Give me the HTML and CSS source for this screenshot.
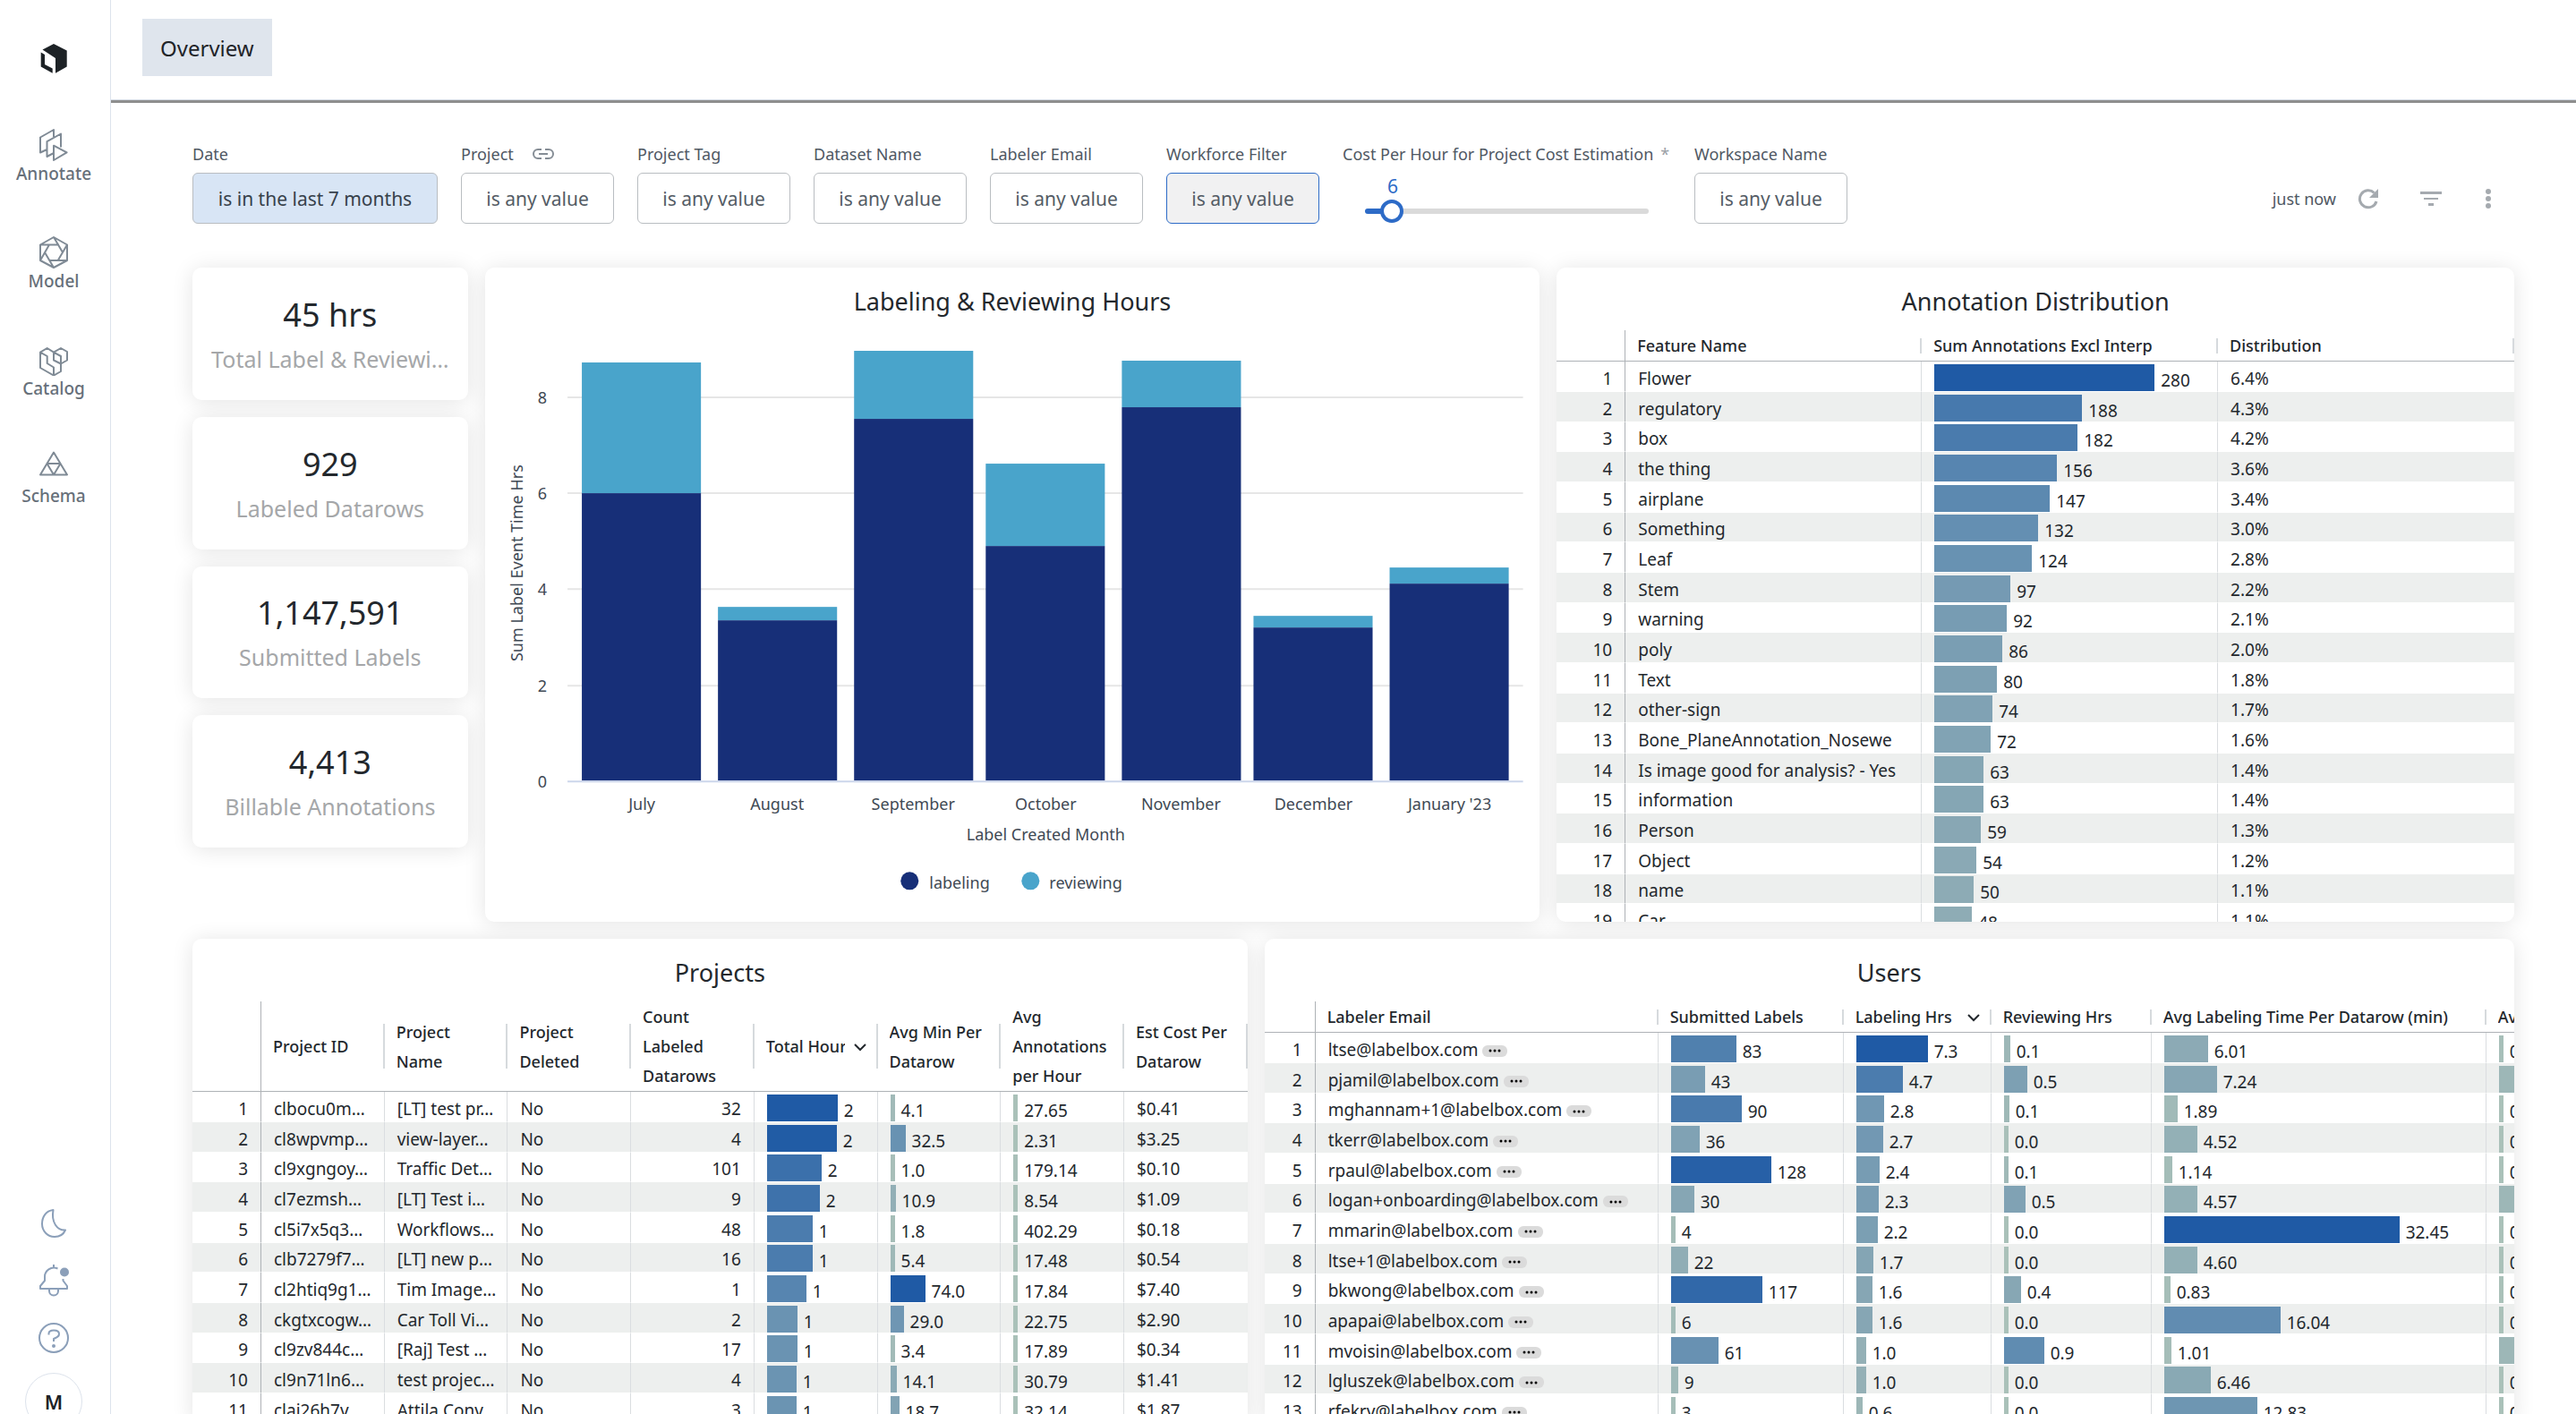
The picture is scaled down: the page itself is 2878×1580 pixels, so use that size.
FILE: index.html
```html
<!DOCTYPE html>
<html lang="en">
  <head>
    <meta charset="UTF-8" />
    <meta name="viewport" content="width=device-width, initial-scale=1.0" />
    <title>Overview</title>
    <link rel="stylesheet" href="styles.css">
  </head>

  <body>
    <div class="app">
      <!-- sidebar -->
      <nav class="sidebar">
        <a class="logo" href="#" aria-label="Home">
          <svg width="30" height="33" viewBox="0 0 30 33">
            <path d="M2.5 6.6 15 0l14.7 7.5v18L17 32.7V16z" />
            <path d="M.7 9.5 5 12v11l8.7 4.5v5.2L.7 25.5z" />
          </svg>
        </a>
        <a class="navItem" href="#">
          <svg width="32" height="36" viewBox="0 0 32 36">
            <path d="M16 9V1L1 9.5v17L8.5 23M24 20.500V5.500L8.500 14.200V31L16 27M16 18.700 30.600 26.400 16 35z" />
          </svg>
          <span>Annotate</span>
        </a>
        <a class="navItem" href="#">
          <svg width="32" height="36" viewBox="0 0 32 36">
            <path d="M16 1l15 8.500v17.500L16 35 1 27V9.500zM1 9.500h21M16 1l10 17M31 9.500 21 26.500M31 27H11M16 35 6 18M1 27 11 9.500" />
          </svg>
          <span>Model</span>
        </a>
        <a class="navItem" href="#">
          <svg width="32" height="36" viewBox="0 0 32 36">
            <path d="M1 9.700 8.700 5 16 9.700 24 5l7 4v9.500l-7 4V31l-8 4.500-15-8.500zM1 9.700l7.700 4.300v8l7.300 4.500v9M16 9.700v8.800l8 4M16 9.700l8 4.300v8.500" />
          </svg>
          <span>Catalog</span>
        </a>
        <a class="navItem" href="#">
          <svg width="32" height="36" viewBox="0 0 32 36">
            <path d="M16 1.500 31 26.500H1zM8.500 14h15L16 26.500z" />
          </svg>
          <span>Schema</span>
        </a>

        <div class="navBottom">
          <button class="iconBtn" aria-label="Dark mode">
            <svg width="32" height="36" viewBox="0 0 32 36">
              <path d="M15.500 3C7 4 3 11 3 18.500c0 8 6 14.500 14 14.500 5.500 0 10-3 12-7.500C20 26 13 17 15.500 3z" />
            </svg>
          </button>
          <button class="iconBtn" aria-label="Notifications">
            <svg width="34" height="36" viewBox="0 0 34 36">
              <path d="M17 0v4M21.500 4.500C14 1.500 7 7 7 13.500V18L2 24v3h30v-3l-4.500-6v-2M12 27.500v2a5 5 0 0 0 10 0v-2" />
              <circle class="dot" cx="29" cy="8.500" r="5" />
            </svg>
          </button>
          <button class="iconBtn" aria-label="Help">
            <svg width="36" height="36" viewBox="0 0 36 36">
              <circle cx="18" cy="18" r="16" />
              <path d="M12.500 14.500V13c0-2.500 2-3.500 5.500-3.500s6 1 6 4-2 3.500-6 5.500v3" />
              <circle class="dot" cx="18" cy="27" r="2" />
            </svg>
          </button>
          <button class="avatar">M</button>
        </div>
      </nav>

      <div class="content">
        <header class="header">
          <button class="tab">Overview</button>
        </header>

        <main class="main">
          <!-- filters -->
          <div class="filters">
            <div class="filter">
              <label for="date">Date</label>
              <button id="date" class="filterBtn active">is in the last 7 months</button>
            </div>
            <div class="filter">
              <label for="project">Project
                <svg class="linkIcon" width="26" height="14" viewBox="0 0 26 14">
                  <path d="M11 2H7a5 5 0 0 0 0 10h4M15 2h4a5 5 0 0 1 0 10h-4M8 7h10" />
                </svg>
              </label>
              <button id="project" class="filterBtn">is any value</button>
            </div>
            <div class="filter">
              <label for="tag">Project Tag</label>
              <button id="tag" class="filterBtn">is any value</button>
            </div>
            <div class="filter">
              <label for="dataset">Dataset Name</label>
              <button id="dataset" class="filterBtn">is any value</button>
            </div>
            <div class="filter">
              <label for="labeler">Labeler Email</label>
              <button id="labeler" class="filterBtn">is any value</button>
            </div>
            <div class="filter">
              <label for="workforce">Workforce Filter</label>
              <button id="workforce" class="filterBtn focused">is any value</button>
            </div>
            <div class="filter cost">
              <label for="cost">Cost Per Hour for Project Cost Estimation <span class="star">*</span></label>
              <div class="slider">
                <output for="cost">6</output>
                <input id="cost" type="range" min="0" max="100" value="6" />
              </div>
            </div>
            <div class="filter">
              <label for="workspace">Workspace Name</label>
              <button id="workspace" class="filterBtn">is any value</button>
            </div>

            <div class="actions">
              <span>just now</span>
              <button aria-label="Reload">
                <svg width="24" height="24" viewBox="0 0 24 24">
                  <path class="stroke" d="M21 15a9.500 9.500 0 1 1-2.500-9.500" />
                  <path d="M23 1v10H13z" />
                </svg>
              </button>
              <button aria-label="Filters">
                <svg width="24" height="24" viewBox="0 0 24 24">
                  <path d="M0 4h24v3H0zM4 11h16v2H4zM9 17h6v3H9z" />
                </svg>
              </button>
              <button aria-label="More">
                <svg width="12" height="24" viewBox="0 0 12 24">
                  <circle cx="6" cy="4" r="3" />
                  <circle cx="6" cy="12" r="3" />
                  <circle cx="6" cy="20" r="3" />
                </svg>
              </button>
            </div>
          </div>

          <div class="dashboard">
            <div class="stats">
              <div class="card stat">
                <strong>45 hrs</strong>
                <span>Total Label &amp; Reviewi…</span>
              </div>
              <div class="card stat">
                <strong>929</strong>
                <span>Labeled Datarows</span>
              </div>
              <div class="card stat">
                <strong>1,147,591</strong>
                <span>Submitted Labels</span>
              </div>
              <div class="card stat">
                <strong>4,413</strong>
                <span>Billable Annotations</span>
              </div>
            </div>

            <section class="card hours">
              <h2>Labeling &amp; Reviewing Hours</h2>
              <svg class="chart" viewBox="1 -1 1178 660">
                <g class="grid">
                  <path d="M93 74h1067M93 181h1067M93 288h1067M93 396h1067" />
                </g>
                <g class="reviewing">
                  <rect x="109" y="35" width="133" height="146" />
                  <rect x="261" y="308" width="133" height="15" />
                  <rect x="413" y="22" width="133" height="76" />
                  <rect x="560" y="148" width="133" height="92" />
                  <rect x="712" y="33" width="133" height="52" />
                  <rect x="859" y="318" width="133" height="13" />
                  <rect x="1011" y="264" width="133" height="18" />
                </g>
                <g class="labeling">
                  <rect x="109" y="181" width="133" height="321" />
                  <rect x="261" y="323" width="133" height="179" />
                  <rect x="413" y="98" width="133" height="404" />
                  <rect x="560" y="240" width="133" height="262" />
                  <rect x="712" y="85" width="133" height="417" />
                  <rect x="859" y="331" width="133" height="171" />
                  <rect x="1011" y="282" width="133" height="220" />
                </g>
                <path class="axis" d="M93 503h1067" />
                <g class="yLabels">
                  <text x="70" y="81">8</text>
                  <text x="70" y="188">6</text>
                  <text x="70" y="295">4</text>
                  <text x="70" y="403">2</text>
                  <text x="70" y="510">0</text>
                </g>
                <g class="xLabels">
                  <text x="176" y="535">July</text>
                  <text x="327" y="535">August</text>
                  <text x="479" y="535">September</text>
                  <text x="627" y="535">October</text>
                  <text x="778" y="535">November</text>
                  <text x="926" y="535">December</text>
                  <text x="1078" y="535">January '23</text>
                  <text x="627" y="569">Label Created Month</text>
                  <text x="0" y="0" transform="translate(43 259) rotate(-90)">Sum Label Event Time Hrs</text>
                </g>
                <circle class="labeling" cx="475" cy="614" r="10" />
                <text x="497" y="623">labeling</text>
                <circle class="reviewing" cx="610" cy="614" r="10" />
                <text x="631" y="623">reviewing</text>
              </svg>
            </section>

            <section class="card distribution">
              <h2>Annotation Distribution</h2>
              <table id="distribution"></table>
            </section>

            <section class="card projects">
              <h2>Projects</h2>
              <table id="projects"></table>
            </section>

            <section class="card users">
              <h2>Users</h2>
              <table id="users"></table>
            </section>
          </div>
        </main>
      </div>
    </div>
    <script src="script.js"></script>
  </body>
</html>
```
FILE: styles.css
```css
* {
  box-sizing: border-box;
}

body {
  margin: 0;
  font-family: "Noto Sans", "Open Sans", sans-serif;
  font-size: 20px;
  color: #23282d;
  background: #fff;
}

button {
  font-family: inherit;
  margin: 0;
  padding: 0;
  border: none;
  background: none;
  cursor: pointer;
}

a {
  color: inherit;
  text-decoration: none;
}

.app {
  display: flex;
  height: 100vh;
  overflow: hidden;
}

/* sidebar */
.sidebar {
  display: flex;
  flex-direction: column;
  align-items: center;
  flex: none;
  width: 124px;
  padding: 49px 3px 0 0;
  border-right: 1px solid #dde3ec;
}

.logo {
  height: 33px;
  margin-bottom: 62px;
  fill: #1d2226;
}

.logo svg,
.navItem svg,
.iconBtn svg {
  display: block;
}

.navItem {
  display: flex;
  flex-direction: column;
  align-items: center;
  height: 64px;
  margin-bottom: 56px;
  line-height: 28px;
  font-size: 19px;
  font-weight: 500;
  color: #67707a;
}

.navItem svg {
  fill: none;
  stroke: #7f8a95;
  stroke-width: 2;
  stroke-linejoin: round;
}

.navBottom {
  display: flex;
  flex-direction: column;
  align-items: center;
  gap: 28px;
  margin-top: auto;
  margin-bottom: -18px;
}

.iconBtn svg {
  fill: none;
  stroke: #8b9fb9;
  stroke-width: 2;
  stroke-linejoin: round;
}

.iconBtn .dot {
  fill: #8b9fb9;
  stroke: none;
}

.avatar {
  flex: none;
  width: 64px;
  height: 64px;
  margin-top: -7px;
  border: 1px solid #dde3ec;
  border-radius: 50%;
  font-size: 22px;
  font-weight: 600;
  color: #1d2226;
}

/* header */
.content {
  flex: 1;
  min-width: 0;
}

.header {
  padding: 21px 35px 26px;
  border-bottom: 1px solid #d3dae3;
}

.tab {
  display: block;
  height: 64px;
  padding: 0 20px;
  font-size: 24px;
  color: #1f2429;
  background: #dfe5ed;
}

.main {
  padding: 43px 69px 0 91px;
  border-top: 3px solid #8e8e8e;
}

/* filters */
.filters {
  display: flex;
  gap: 26px;
  margin-bottom: 49px;
}

.filter label {
  display: flex;
  align-items: center;
  height: 28px;
  margin-bottom: 7px;
  font-size: 18px;
  white-space: nowrap;
  color: #4f5863;
}

.linkIcon {
  margin-left: 20px;
  fill: none;
  stroke: #858d95;
  stroke-width: 2;
}

.star {
  margin-left: 8px;
  color: #9aa0a6;
}

.filterBtn {
  min-width: 171px;
  height: 57px;
  padding: 0 24px;
  border: 1px solid #b9bdc1;
  border-radius: 6px;
  font-size: 21px;
  white-space: nowrap;
  color: #545c65;
}

.filterBtn.active {
  min-width: 274px;
  color: #37414b;
  background: #d8e5f5;
}

.filterBtn.focused {
  border-color: #2d6bc7;
  background: #f1f1f2;
}

.cost {
  width: 367px;
}

.slider {
  display: flex;
  flex-direction: column;
  padding: 0 25px;
}

.slider output {
  padding-left: 25px;
  font-size: 21px;
  line-height: 30px;
  color: #2d6bc7;
}

.slider input {
  appearance: none;
  width: 100%;
  height: 26px;
  margin: 0;
  background: none;
}

.slider input::-webkit-slider-runnable-track {
  height: 6px;
  border-radius: 3px;
  background: linear-gradient(to right, #2d6bc7 10%, #dadada 10%);
}

.slider input::-webkit-slider-thumb {
  appearance: none;
  width: 26px;
  height: 26px;
  margin-top: -10px;
  border: 4px solid #2d6bc7;
  border-radius: 50%;
  background: #fff;
}

.actions {
  display: flex;
  align-items: center;
  align-self: flex-end;
  gap: 46px;
  height: 57px;
  margin-left: auto;
  padding-right: 23px;
  font-size: 18px;
  color: #4f5863;
}

.actions span {
  margin-right: -22px;
}

.actions svg {
  display: block;
  fill: #a5aaaf;
}

.actions .stroke {
  fill: none;
  stroke: #a5aaaf;
  stroke-width: 3;
}

/* dashboard */
.dashboard {
  display: grid;
  grid-template-columns: repeat(24, 1fr);
  gap: 19px;
}

.card {
  overflow: hidden;
  border-radius: 10px;
  background: #fff;
  box-shadow: 0 2px 24px rgba(0, 0, 0, 0.11);
}

.card h2 {
  margin: 0;
  padding: 20px 0 14px;
  font-size: 27px;
  font-weight: 400;
  line-height: 36px;
  text-align: center;
}

.stats {
  display: grid;
  grid-column: span 3;
  grid-auto-rows: 1fr;
  gap: 19px;
  height: 648px;
}

.hours {
  grid-column: span 11;
  height: 731px;
}

.distribution {
  grid-column: span 10;
  height: 731px;
}

.projects {
  grid-column: span 11;
}

.users {
  grid-column: span 13;
}

.stat {
  display: flex;
  flex-direction: column;
  align-items: center;
  justify-content: center;
  padding-top: 2px;
  white-space: nowrap;
}

.stat strong {
  font-size: 36px;
  font-weight: 400;
  line-height: 54px;
}

.stat span {
  font-size: 25px;
  line-height: 44px;
  color: #a5a7a9;
}

/* chart */
.chart {
  display: block;
  width: 100%;
}

.chart text {
  font-size: 18px;
  fill: #3f4954;
}

.chart .yLabels {
  text-anchor: end;
}

.chart .xLabels {
  text-anchor: middle;
}

.grid {
  stroke: #e6e6e6;
  stroke-width: 2;
}

.axis {
  stroke: #ccd6eb;
  stroke-width: 2;
}

.labeling {
  fill: #172f78;
}

.reviewing {
  fill: #49a4cb;
}

/* tables */
table {
  width: 100%;
  table-layout: fixed;
  border-collapse: separate;
  border-spacing: 0;
}

#users {
  width: 1750px;
}

th {
  padding: 1px 13px 0;
  overflow: hidden;
  border-bottom: 1px solid #aeb2b6;
  font-weight: 500;
  text-align: left;
  background: linear-gradient(#d6dadd, #d6dadd) right center / 2px 50% no-repeat;
}

th:first-child {
  background: none;
}

.headLabel {
  display: flex;
  align-items: center;
  justify-content: space-between;
  font-size: 18px;
  line-height: 33px;
}

.headLabel span {
  overflow: hidden;
}

.nowrap {
  white-space: nowrap;
}

.headLabel svg {
  flex: none;
  margin-left: 10px;
  fill: none;
  stroke: #23282d;
  stroke-width: 2;
}

td {
  height: 34px;
  padding: 4px 14px 0;
  overflow: hidden;
  border-right: 1px solid #dadde0;
  border-bottom: 1px solid #fff;
  line-height: 28px;
  font-size: 19px;
  white-space: nowrap;
}

tr:nth-child(even) td {
  background: #edefee;
}

tr:nth-child(3n) td {
  height: 33px;
}

th:first-child,
td:first-child {
  border-right: 1px solid #aeb2b6;
  text-align: right;
}

.number {
  text-align: right;
}

td:last-child {
  border-right: none;
}

.barCell {
  padding-top: 0;
}

.barBox {
  display: flex;
  gap: 7px;
  height: 32px;
  padding-top: 2px;
  line-height: 36px;
}

.bar {
  flex: none;
  min-width: 5px;
  height: 30px;
}

.more {
  width: 28px;
  height: 13px;
  border-radius: 6px;
  vertical-align: -1px;
  background: #dbdbdb;
}

.more svg {
  display: block;
  margin: 0 auto;
}
```
FILE: script.js
```js
// colour stops of the bar scale, low to high
const stops = [
  [0, [170, 193, 185]],
  [0.22, [134, 166, 180]],
  [0.45, [103, 145, 178]],
  [0.67, [71, 121, 173]],
  [1, [31, 90, 165]],
];

function barColor(ratio) {
  let i = 1;
  while (i < stops.length - 1 && ratio > stops[i][0]) i++;
  const [from, a] = stops[i - 1];
  const [to, b] = stops[i];
  const t = (ratio - from) / (to - from);
  return `rgb(${a.map((v, k) => Math.round(v + (b[k] - v) * t)).join(",")})`;
}

const chevron = '<svg width="14" height="10" viewBox="0 0 14 10"><path d="M1 2l6 6 6-6"/></svg>';
const dots =
  '<svg width="16" height="4"><circle cx="3" cy="2" r="1.500"/><circle cx="8" cy="2" r="1.500"/><circle cx="13" cy="2" r="1.500"/></svg>';

// bar columns: max = value of the fullest bar, size = its width
// a bar value is either a number or [number, shown text]
function renderCell(column, value) {
  if (column.max) {
    const [num, text] = Array.isArray(value) ? value : [value, value];
    const ratio = num / column.max;
    return `<td class="barCell"><div class="barBox">
      <div class="bar" style="width:${Math.round(ratio * column.size)}px;background:${barColor(ratio)}"></div>
      <span>${text}</span></div></td>`;
  }
  if (column.more) {
    return `<td>${value} <button class="more" aria-label="More">${dots}</button></td>`;
  }
  return `<td class="${column.number ? "number" : ""}">${value}</td>`;
}

function renderTable(id, indexWidth, columns, rows) {
  const table = document.getElementById(id);
  const cols = columns.map((c) => `<col${c.width ? ` style="width:${c.width}px"` : ""}>`).join("");
  const head = columns
    .map(
      (c) => `<th><div class="headLabel"><span class="${c.sorted ? "nowrap" : ""}">${c.title}</span>
      ${c.sorted ? chevron : ""}</div></th>`
    )
    .join("");
  const body = rows
    .map((row, i) => `<tr><td>${i + 1}</td>${row.map((v, k) => renderCell(columns[k], v)).join("")}</tr>`)
    .join("");
  table.innerHTML = `<colgroup><col style="width:${indexWidth}px">${cols}</colgroup>
    <thead><tr><th></th>${head}</tr></thead><tbody>${body}</tbody>`;
}

renderTable(
  "distribution",
  77,
  [{ title: "Feature Name" }, { title: "Sum Annotations Excl Interp", max: 280, size: 246 }, { title: "Distribution" }],
  [
    ["Flower", 280, "6.4%"],
    ["regulatory", 188, "4.3%"],
    ["box", 182, "4.2%"],
    ["the thing", 156, "3.6%"],
    ["airplane", 147, "3.4%"],
    ["Something", 132, "3.0%"],
    ["Leaf", 124, "2.8%"],
    ["Stem", 97, "2.2%"],
    ["warning", 92, "2.1%"],
    ["poly", 86, "2.0%"],
    ["Text", 80, "1.8%"],
    ["other-sign", 74, "1.7%"],
    ["Bone_PlaneAnnotation_Nosewe", 72, "1.6%"],
    ["Is image good for analysis? - Yes", 63, "1.4%"],
    ["information", 63, "1.4%"],
    ["Person", 59, "1.3%"],
    ["Object", 54, "1.2%"],
    ["name", 50, "1.1%"],
    ["Car", 48, "1.1%"],
  ]
);

renderTable(
  "projects",
  77,
  [
    { title: "Project ID" },
    { title: "Project<br>Name" },
    { title: "Project<br>Deleted" },
    { title: "Count<br>Labeled<br>Datarows", number: true },
    { title: "Total Hours", max: 2.4, size: 79, sorted: true },
    { title: "Avg Min Per<br>Datarow", max: 74, size: 39 },
    { title: "Avg<br>Annotations<br>per Hour", max: 40000, size: 79 },
    { title: "Est Cost Per<br>Datarow" },
  ],
  [
    ["clbocu0m…", "[LT] test pr…", "No", 32, [2.4, "2"], [4.1, "4.1"], 27.65, "$0.41"],
    ["cl8wpvmp…", "view-layer…", "No", 4, [2.36, "2"], 32.5, 2.31, "$3.25"],
    ["cl9xgngoy…", "Traffic Det…", "No", 101, [1.85, "2"], [1, "1.0"], 179.14, "$0.10"],
    ["cl7ezmsh…", "[LT] Test i…", "No", 9, [1.79, "2"], 10.9, 8.54, "$1.09"],
    ["cl5i7x5q3…", "Workflows…", "No", 48, [1.55, "1"], 1.8, 402.29, "$0.18"],
    ["clb7279f7…", "[LT] new p…", "No", 16, [1.55, "1"], 5.4, 17.48, "$0.54"],
    ["cl2htiq9g1…", "Tim Image…", "No", 1, [1.34, "1"], [74, "74.0"], 17.84, "$7.40"],
    ["ckgtxcogw…", "Car Toll Vi…", "No", 2, [1.03, "1"], [29, "29.0"], 22.75, "$2.90"],
    ["cl9zv844c…", "[Raj] Test …", "No", 17, [1.03, "1"], 3.4, 17.89, "$0.34"],
    ["cl9n71ln6…", "test projec…", "No", 4, [1, "1"], 14.1, 30.79, "$1.41"],
    ["claj26h7v…", "Attila Conv…", "No", 3, [1, "1"], 18.7, 32.14, "$1.87"],
  ]
);

renderTable(
  "users",
  57,
  [
    { title: "Labeler Email", width: 383, more: true },
    { title: "Submitted Labels", width: 207, max: 137, size: 120 },
    { title: "Labeling Hrs", width: 165, max: 7.3, size: 80, sorted: true },
    { title: "Reviewing Hrs", width: 179, max: 1.8, size: 90 },
    { title: "Avg Labeling Time Per Datarow (min)", width: 374, max: 32.45, size: 263 },
    { title: "Avg Reviewing Time Per Datarow (min)", max: 5, size: 263 },
  ],
  [
    ["ltse@labelbox.com", 83, 7.3, [0.14, "0.1"], 6.01, [0.08, "0.08"]],
    ["pjamil@labelbox.com", 43, 4.7, [0.52, "0.5"], 7.24, [0.4, "0.40"]],
    ["mghannam+1@labelbox.com", 90, 2.8, [0.12, "0.1"], 1.89, [0.01, "0.01"]],
    ["tkerr@labelbox.com", 36, 2.7, [0.01, "0.0"], 4.52, [0, "0.00"]],
    ["rpaul@labelbox.com", 128, 2.4, [0.1, "0.1"], 1.14, [0, "0.00"]],
    ["logan+onboarding@labelbox.com", 30, 2.3, [0.48, "0.5"], 4.57, [0.4, "0.40"]],
    ["mmarin@labelbox.com", 4, 2.2, [0, "0.0"], 32.45, [0, "0.00"]],
    ["ltse+1@labelbox.com", 22, 1.7, [0, "0.0"], [4.6, "4.60"], [0, "0.00"]],
    ["bkwong@labelbox.com", 117, 1.6, [0.38, "0.4"], 0.83, [0, "0.00"]],
    ["apapai@labelbox.com", 6, 1.6, [0, "0.0"], 16.04, [0, "0.00"]],
    ["mvoisin@labelbox.com", 61, [1, "1.0"], 0.9, 1.01, [0.4, "0.40"]],
    ["lgluszek@labelbox.com", 9, [1, "1.0"], [0, "0.0"], 6.46, [0, "0.00"]],
    ["rfekry@labelbox.com", 3, 0.6, [0, "0.0"], 12.83, [0, "0.00"]],
  ]
);
```
